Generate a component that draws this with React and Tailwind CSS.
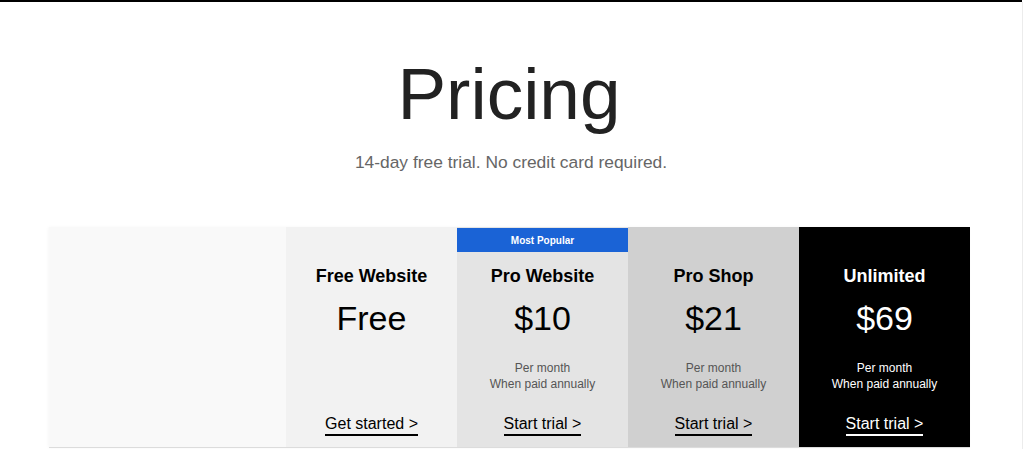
import React from 'react'

const plans = [
  { name: 'Free Website', price: 'Free', cta: 'Get started >', bg: 'bg-[#f2f2f2]', text: 'text-black', sub: 'text-[#555]' },
  { name: 'Pro Website', price: '$10', cta: 'Start trial >', bg: 'bg-[#e4e4e4]', text: 'text-black', sub: 'text-[#555]', popular: true, note: true },
  { name: 'Pro Shop', price: '$21', cta: 'Start trial >', bg: 'bg-[#d0d0d0]', text: 'text-black', sub: 'text-[#555]', note: true },
  { name: 'Unlimited', price: '$69', cta: 'Start trial >', bg: 'bg-black', text: 'text-white', sub: 'text-white', note: true },
]

function PlanColumn({ plan }) {
  return (
    <div className={`w-[171px] flex flex-col items-center ${plan.bg} ${plan.text}`}>
      {plan.popular ? (
        <div className="w-full h-[24px] mt-px bg-[#1a63d6] text-white text-[10px] font-bold flex items-center justify-center">
          Most Popular
        </div>
      ) : (
        <div className="h-[25px]" />
      )}
      <div className="mt-[13px] text-[18px] font-bold leading-[22px]">{plan.name}</div>
      <div className="mt-[11px] text-[34px] leading-[40px]">{plan.price}</div>
      <div className={`mt-[22px] h-[32px] text-[12px] leading-[16px] text-center ${plan.sub}`}>
        {plan.note && (
          <>
            <div>Per month</div>
            <div>When paid annually</div>
          </>
        )}
      </div>
      <a className="mt-[23px] text-[16px] leading-[18px] pb-[1px] border-b-2 border-current">
        {plan.cta}
      </a>
    </div>
  )
}

export default function App() {
  return (
    <div className="w-[1024px] h-[449px] overflow-hidden bg-white font-['Liberation_Sans',Arial,sans-serif] flex flex-col">
      <div className="flex">
        <div className="w-[1022px] h-[2px] bg-black" />
      </div>
      <div className="flex flex-1">
        <div className="w-[1022px] flex flex-col items-center">
          <h1 className="mt-[50px] ml-[-4px] text-[73px] leading-[84px] text-[#222]">Pricing</h1>
          <p className="mt-[16px] text-[17.4px] leading-[20px] text-[#666]">14-day free trial. No credit card required.</p>
          <div className="mt-[55px] w-[921px] ml-[-3px] h-[221px] flex border-b border-[#dcdcdc] shadow-[-1px_0_3px_rgba(0,0,0,0.03)]">
            <div className="w-[237px] bg-[#f9f9f9]" />
            {plans.map((p) => (
              <PlanColumn key={p.name} plan={p} />
            ))}
          </div>
        </div>
        <div className="w-[1px] bg-[#ececec]" />
      </div>
    </div>
  )
}
